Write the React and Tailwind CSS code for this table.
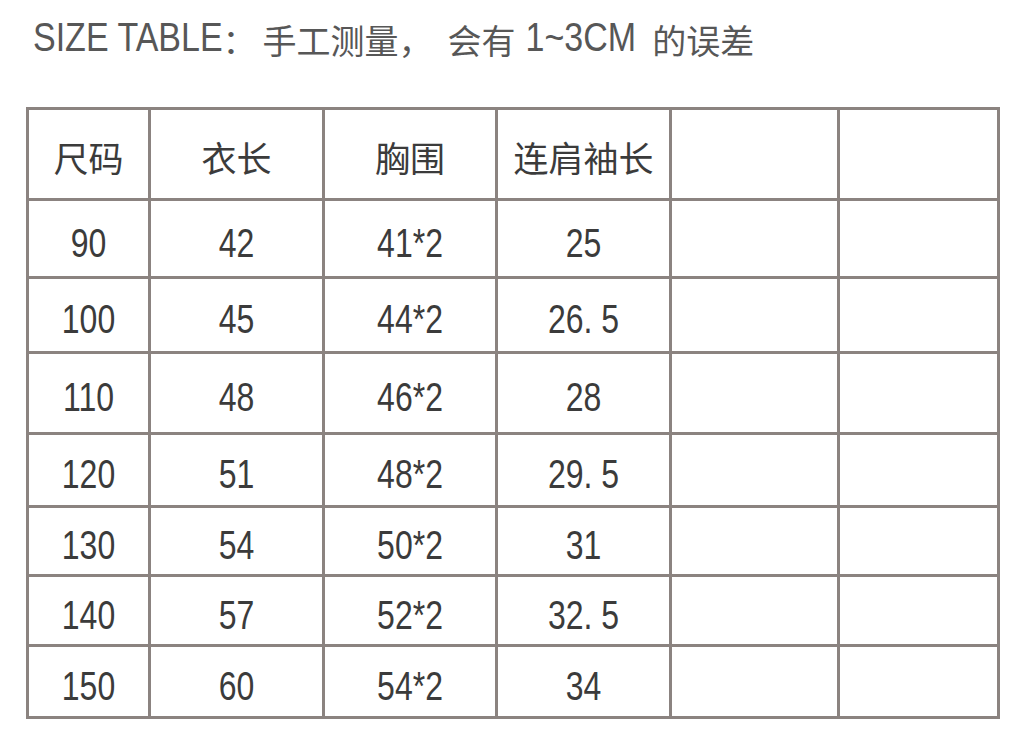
import React from 'react';

const headers = ['尺码', '衣长', '胸围', '连肩袖长', '', ''];

const rows = [
  { h: 'h-[75px]', cells: ['90', '42', '41*2', '25'] },
  { h: 'h-[72px]', cells: ['100', '45', '44*2', '26. 5'] },
  { h: 'h-[78px]', cells: ['110', '48', '46*2', '28'] },
  { h: 'h-[70px]', cells: ['120', '51', '48*2', '29. 5'] },
  { h: 'h-[66px]', cells: ['130', '54', '50*2', '31'] },
  { h: 'h-[67px]', cells: ['140', '57', '52*2', '32. 5'] },
  { h: 'h-[69px]', cells: ['150', '60', '54*2', '34'] },
];

const cols = 'grid grid-cols-[119px_171px_170px_171px_165px_157px] gap-x-[3px]';

export default function App() {
  return (
    <div className="w-[1024px] h-[749px] bg-white overflow-hidden">
      {/* title */}
      <div className="flex items-end pl-[33px] pt-[13px] h-[57px] text-[#575757] leading-none">
        <span className="font-['Liberation_Sans',sans-serif] text-[34px] scale-y-[1.2] origin-bottom">SIZE TABLE</span>
        <span className="font-['Noto_Sans_CJK_SC',sans-serif] text-[34px]">：</span>
        <span className="font-['Noto_Sans_CJK_SC',sans-serif] text-[34px] ml-[6px]">手工测量，</span>
        <span className="font-['Noto_Sans_CJK_SC',sans-serif] text-[34px] ml-[15px]">会有</span>
        <span className="font-['Liberation_Sans',sans-serif] text-[34px] scale-y-[1.2] origin-bottom ml-[10px]">1~3CM</span>
        <span className="font-['Noto_Sans_CJK_SC',sans-serif] text-[34px] ml-[16px]">的误差</span>
      </div>

      {/* table: grey background shows through the 3px gaps as rules */}
      <div className="ml-[26px] mt-[50px] w-[974px] bg-[#8b8380] p-[3px] flex flex-col gap-y-[3px] text-[#3b3b3b]">
        <div className={`${cols} h-[88px]`}>
          {headers.map((t, i) => (
            <div key={i} className="bg-white flex items-center justify-center pt-[6px] font-['Noto_Sans_CJK_SC',sans-serif] text-[35px]">
              {t}
            </div>
          ))}
        </div>
        {rows.map((r, ri) => (
          <div key={ri} className={`${cols} ${r.h}`}>
            {[0, 1, 2, 3, 4, 5].map((ci) => (
              <div key={ci} className="bg-white flex items-center justify-center pt-[8px] font-['Liberation_Sans',sans-serif] text-[32px] leading-none">
                <span className="inline-block scale-y-125">{r.cells[ci] || ''}</span>
              </div>
            ))}
          </div>
        ))}
      </div>
    </div>
  );
}
